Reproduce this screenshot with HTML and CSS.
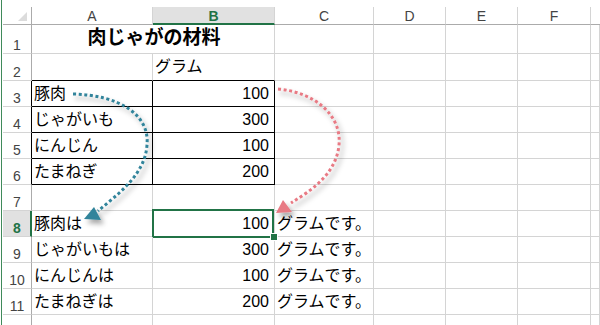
FILE: index.html
```html
<!DOCTYPE html>
<html lang="ja">
<head>
<meta charset="utf-8">
<title>肉じゃがの材料</title>
<link rel="stylesheet" href="styles.css">
</head>
<body>
<div class="window">
  <div class="edge"></div>
  <div class="sheet">
    <div class="corner"><span class="tri"></span></div>
    <div class="ch">A</div>
    <div class="ch sel">B</div>
    <div class="ch">C</div>
    <div class="ch">D</div>
    <div class="ch">E</div>
    <div class="ch">F</div>
    <div class="ch last"></div>

    <div class="rh">1</div>
    <div class="c title span2">肉じゃがの材料</div>
    <div class="c"></div><div class="c"></div><div class="c"></div><div class="c"></div><div class="c"></div>

    <div class="rh">2</div>
    <div class="c bb"></div>
    <div class="c bb">グラム</div>
    <div class="c"></div><div class="c"></div><div class="c"></div><div class="c"></div><div class="c"></div>

    <div class="rh br">3</div>
    <div class="c bx">豚肉</div>
    <div class="c bx num">100</div>
    <div class="c"></div><div class="c"></div><div class="c"></div><div class="c"></div><div class="c"></div>

    <div class="rh br">4</div>
    <div class="c bx">じゃがいも</div>
    <div class="c bx num">300</div>
    <div class="c"></div><div class="c"></div><div class="c"></div><div class="c"></div><div class="c"></div>

    <div class="rh br">5</div>
    <div class="c bx">にんじん</div>
    <div class="c bx num">100</div>
    <div class="c"></div><div class="c"></div><div class="c"></div><div class="c"></div><div class="c"></div>

    <div class="rh br">6</div>
    <div class="c bx">たまねぎ</div>
    <div class="c bx num">200</div>
    <div class="c"></div><div class="c"></div><div class="c"></div><div class="c"></div><div class="c"></div>

    <div class="rh">7</div>
    <div class="c"></div><div class="c"></div><div class="c"></div><div class="c"></div><div class="c"></div><div class="c"></div><div class="c"></div>

    <div class="rh rsel">8</div>
    <div class="c">豚肉は</div>
    <div class="c num active">100<span class="handle"></span></div>
    <div class="c">グラムです。</div>
    <div class="c"></div><div class="c"></div><div class="c"></div><div class="c"></div>

    <div class="rh">9</div>
    <div class="c">じゃがいもは</div>
    <div class="c num">300</div>
    <div class="c">グラムです。</div>
    <div class="c"></div><div class="c"></div><div class="c"></div><div class="c"></div>

    <div class="rh">10</div>
    <div class="c">にんじんは</div>
    <div class="c num">100</div>
    <div class="c">グラムです。</div>
    <div class="c"></div><div class="c"></div><div class="c"></div><div class="c"></div>

    <div class="rh">11</div>
    <div class="c">たまねぎは</div>
    <div class="c num">200</div>
    <div class="c">グラムです。</div>
    <div class="c"></div><div class="c"></div><div class="c"></div><div class="c"></div>

    <div class="rh"></div>
    <div class="c"></div><div class="c"></div><div class="c"></div><div class="c"></div><div class="c"></div><div class="c"></div><div class="c"></div>
  </div>

  <svg class="arrows" width="600" height="325" viewBox="0 0 600 325" xmlns="http://www.w3.org/2000/svg">
    <defs>
      <filter id="sh" x="-30%" y="-30%" width="160%" height="160%">
        <feDropShadow dx="3" dy="4" stdDeviation="2.6" flood-color="#000" flood-opacity="0.35"/>
      </filter>
    </defs>
    <g filter="url(#sh)">
      <path d="M73,94 C118,95 150,114 147,145 C145,175 118,194 98,211" fill="none" stroke="#31849b" stroke-width="3" stroke-dasharray="3 2.6"/>
      <polygon points="84,219 94,207 101,220" fill="#31849b"/>
    </g>
    <g filter="url(#sh)">
      <path d="M278,89 C314,92 342,115 339,145 C336,175 310,191 291,203" fill="none" stroke="#e87a84" stroke-width="3" stroke-dasharray="3 2.6"/>
      <polygon points="276,213 283,200 292,212" fill="#e87a84"/>
    </g>
  </svg>
</div>
</body>
</html>
```

FILE: styles.css
```css
* { box-sizing: border-box; }
html, body { margin: 0; padding: 0; background: #fff; }
body {
  width: 600px;
  height: 325px;
  overflow: hidden;
  font-family: "Liberation Sans", "Noto Sans CJK JP", sans-serif;
}
.window {
  position: relative;
  width: 600px;
  height: 325px;
  display: flex;
  overflow: hidden;
}
.edge {
  width: 3px;
  height: 325px;
  border-left: 1px solid #fff;
  border-right: 1px solid #fff;
  background: #3f8a5a;
  flex: none;
}
.sheet {
  margin-top: 7px;
  display: grid;
  grid-template-columns: 29px 121px 122px 99px 72px 72px 73px 9px;
  grid-template-rows: 18px 29px 27px repeat(9, 26px) 11px;
  flex: none;
}
.corner {
  border-right: 1px solid #ababab;
  border-bottom: 1px solid #ababab;
  position: relative;
}
.tri {
  position: absolute;
  right: 4px;
  bottom: 3px;
  width: 9px;
  height: 9px;
  background: #dcdcdc;
  clip-path: polygon(100% 0, 100% 100%, 0 100%);
}
.ch {
  border-right: 1px solid #d4d4d4;
  border-bottom: 1px solid #ababab;
  font-size: 14px;
  color: #444;
  display: flex;
  align-items: center;
  justify-content: center;
  line-height: 16px;
}
.ch.sel {
  background: #e1e1e1;
  border-bottom: 2px solid #217346;
  color: #217346;
  font-weight: bold;
  padding-top: 1px;
}
.ch.last { border-right: none; }
.rh {
  border-right: 1px solid #ababab;
  border-bottom: 1px solid #d4d4d4;
  font-size: 14px;
  color: #444;
  display: flex;
  align-items: flex-end;
  justify-content: center;
  line-height: 14px;
  padding-bottom: 1px;
}
.rh.br { border-right-color: #000; }
.rh.rsel {
  background: #e1e1e1;
  border-right: 2px solid #217346;
  color: #217346;
  font-weight: bold;
  padding-left: 1px;
}
.c {
  border-right: 1px solid #d4d4d4;
  border-bottom: 1px solid #d4d4d4;
  font-size: 16px;
  line-height: 18px;
  color: #000;
  display: flex;
  align-items: center;
  padding: 0 3px 0 2px;
  white-space: nowrap;
  position: relative;
}
.c.span2 { grid-column: span 2; }
.c.title {
  font-size: 19px;
  font-weight: bold;
  justify-content: center;
  padding-right: 0;
  padding-bottom: 2px;
}
.c.bb { border-bottom-color: #000; }
.c.bx { border-right-color: #000; border-bottom-color: #000; }
.c.num { justify-content: flex-end; padding-right: 5px; }
.c.active::after {
  content: "";
  position: absolute;
  left: -1px;
  top: -2px;
  right: 0;
  bottom: -2px;
  border: 2px solid #217346;
}
.handle {
  position: absolute;
  right: -3px;
  bottom: -4px;
  width: 6px;
  height: 6px;
  background: #217346;
  outline: 1px solid #fff;
  z-index: 2;
}
.arrows {
  position: absolute;
  left: 0;
  top: 0;
  pointer-events: none;
}
```
